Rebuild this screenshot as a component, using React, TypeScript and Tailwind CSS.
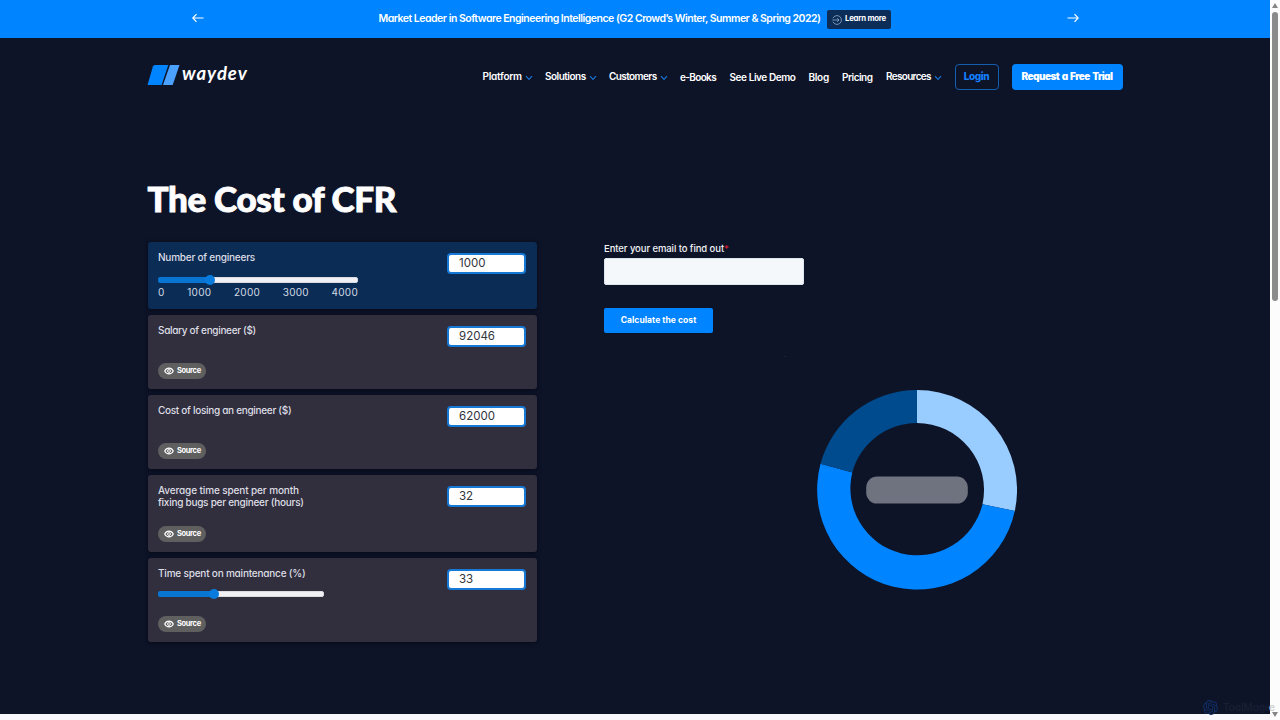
import React from "react";
import { SiOpenai } from "react-icons/si";

const sans = "font-['Inter','Open_Sans',sans-serif] [font-feature-settings:'cv11']";

function Chevron() {
  return (
    <svg viewBox="0 0 8 6" className="mt-[2px] h-[6px] w-2 shrink-0" fill="none" stroke="#1674d4" strokeWidth="1.2">
      <path d="M1 1.2 4 4.3 7 1.2" />
    </svg>
  );
}

function Arrow({ flip = false }: { flip?: boolean }) {
  return (
    <svg viewBox="0 0 12 10" className={flip ? "h-[10px] w-3 shrink-0 rotate-180" : "h-[10px] w-3 shrink-0"} fill="none" stroke="#fff" strokeWidth="1.2">
      <path d="M0.5 5H11M7.5 1.2 11.2 5 7.5 8.8" />
    </svg>
  );
}

type NavItem = { label: string; width: string; menu?: boolean };

const nav: NavItem[] = [
  { label: "Platform", width: "w-[62.5px] tracking-[-0.25px]", menu: true },
  { label: "Solutions", width: "w-[64px] tracking-[-0.5px]", menu: true },
  { label: "Customers", width: "w-[71px] tracking-[-0.58px]", menu: true },
  { label: "e-Books", width: "w-[49.5px] tracking-[-0.65px]" },
  { label: "See Live Demo", width: "w-[79px] tracking-[-0.42px]" },
  { label: "Blog", width: "w-[33.5px] tracking-[-0.3px]" },
  { label: "Pricing", width: "w-[44px] tracking-[-0.5px]" },
  { label: "Resources", width: "w-[68.5px] tracking-[-0.68px]", menu: true },
];

function Field({ value }: { value: string }) {
  return (
    <div className="mt-[11px] flex h-[21px] w-[79px] shrink-0 items-center rounded-[4px] border-2 border-[#1779d6] bg-white pl-[10px] text-[11.5px] text-[#30343b]">
      <span>{value}</span>
    </div>
  );
}

function Source() {
  return (
    <div className="flex h-4 w-12 items-center gap-[3px] rounded-full bg-[#5f5f60] pl-[6px] text-[7.5px] font-bold tracking-[-0.36px] text-white">
      <svg viewBox="0 0 10 8" className="h-2 w-[10px] shrink-0" fill="none" stroke="#fff">
        <path d="M0.7 4C2.6 0.2 7.4 0.2 9.3 4 7.4 7.8 2.6 7.8 0.7 4Z" strokeWidth="1.1" />
        <circle cx="5" cy="4" r="1.4" strokeWidth="1" />
      </svg>
      <span>Source</span>
    </div>
  );
}

function Slider({ className, fill }: { className: string; fill: string }) {
  return (
    <div className={`flex h-[10px] items-center ${className}`}>
      <div className={`h-[6px] rounded-l-[2px] bg-[#0975d2] ${fill}`} />
      <div className="z-10 -mx-[5px] size-[10px] shrink-0 rounded-full bg-[#087bdc]" />
      <div className="h-[6px] flex-1 rounded-r-[2px] border border-[#d9dbe0] bg-[#f1f0f4]" />
    </div>
  );
}

function Card({ className, value, children }: { className: string; value: string; children: React.ReactNode }) {
  return (
    <section className={`flex justify-between rounded-[3px] pr-[11px] pl-[10.5px] shadow-[0_1px_4px_#050a17] ${className}`}>
      <div className="flex flex-col">{children}</div>
      <Field value={value} />
    </section>
  );
}

const label = "mt-[9px] h-3 whitespace-nowrap text-[10px] font-medium leading-3 text-[#dedee5]";

export default function App() {
  return (
    <div className={`flex h-[720px] w-[1280px] overflow-hidden bg-[#0e1428] ${sans}`}>
      <div className="flex w-[1270px] shrink-0 flex-col">
        <div className="flex h-[38px] shrink-0 items-center bg-[#0084ff] pb-[2px] pl-[192px] text-white">
          <Arrow flip />
          <p className="mt-px ml-[174.5px] w-[448.5px] whitespace-nowrap text-[10.5px] font-semibold tracking-[-0.5px]">
            Market Leader in Software Engineering Intelligence (G2 Crowd’s Winter, Summer &amp; Spring 2022)
          </p>
          <button className="mt-[2px] flex h-[19px] w-[64px] shrink-0 items-center gap-[3px] rounded-[2px] bg-[#0c2d58] pl-[5px] text-[7.8px] font-bold tracking-[-0.25px] whitespace-nowrap">
            <svg viewBox="0 0 10 10" className="mt-px size-[10px] shrink-0" fill="none" stroke="#a9bdd6" strokeWidth=".7">
              <path d="M1 3.2A4.4 4.4 0 1 1 1 6.8M0.4 5H7M5.2 3.2 7 5 5.2 6.8" />
            </svg>
            Learn more
          </button>
          <div className="ml-[176px]">
            <Arrow />
          </div>
        </div>

        <header className="flex h-[77px] shrink-0 items-center pl-[147px] text-white">
          <svg viewBox="0 0 34 22" className="mb-[3px] h-[22px] w-[34px] shrink-0">
            <path d="M7.5 1H21.3L14.6 21H0.5L6 2.2Z" fill="#0084ff" />
            <path d="M23 1H32.5L25.7 21H16Z" fill="#4ba1ff" />
          </svg>
          <span className="mb-[5px] w-[301.5px] pl-px font-['Lato',sans-serif] text-[18.5px] font-bold tracking-[1px] italic">waydev</span>
          <nav className="flex text-[10px] font-semibold">
            {nav.map((n) => (
              <a key={n.label} className={`flex shrink-0 items-center gap-[3px] whitespace-nowrap ${n.width}`}>
                <span className={n.menu ? "" : "pt-px"}>{n.label}</span>
                {n.menu && <Chevron />}
              </a>
            ))}
          </nav>
          <button className="flex h-[26px] w-[44px] shrink-0 items-center justify-center rounded-[4px] border border-[#145eae] pb-px text-[10px] font-extrabold tracking-[-0.4px] text-[#147fff]">
            Login
          </button>
          <button className="ml-[13px] flex h-[26px] w-[111px] shrink-0 items-center justify-center rounded-[4px] bg-[#0084ff] pb-px text-[10px] font-black tracking-[-0.55px] [word-spacing:1px] whitespace-nowrap">
            Request a Free Trial
          </button>
        </header>

        <main className="flex h-[599px] shrink-0 pl-[147.5px]">
          <div className="w-[389.5px] shrink-0">
            <h1 className="mt-[63px] mb-[24px] h-10 font-['Lato',sans-serif] text-[35px] leading-10 font-black tracking-[-0.3px] whitespace-nowrap text-white [-webkit-text-stroke:0.9px_white]">
              The Cost of CFR
            </h1>
            <div className="flex flex-col gap-[6px]">
              <Card className="h-[67.4px] bg-[#0a2c55]" value="1000">
                <div className={`${label} tracking-[-0.22px]`}>Number of engineers</div>
                <Slider className="mt-[12px] w-[199.5px]" fill="w-[52px]" />
                <div className="flex h-[14px] w-[200px] items-center justify-between text-[10px] tracking-[0.25px] text-[#d5dae5]">
                  <span>0</span>
                  <span>1000</span>
                  <span>2000</span>
                  <span>3000</span>
                  <span>4000</span>
                </div>
              </Card>
              <Card className="h-[74px] bg-[#312f3e]" value="92046">
                <div className={`${label} tracking-[-0.32px]`}>Salary of engineer ($)</div>
                <div className="mt-[26.6px]"><Source /></div>
              </Card>
              <Card className="h-[74px] bg-[#312f3e]" value="62000">
                <div className={`${label} tracking-[-0.3px]`}>Cost of losing an engineer ($)</div>
                <div className="mt-[26.6px]"><Source /></div>
              </Card>
              <Card className="h-[77px] bg-[#312f3e]" value="32">
                <div className={`${label} mb-[12px]`}>
                  <span className="tracking-[-0.12px]">Average time spent per month</span>
                  <br />
                  <span className="tracking-[-0.26px]">fixing bugs per engineer (hours)</span>
                </div>
                <div className="mt-[17.6px]"><Source /></div>
              </Card>
              <Card className="h-[83.5px] bg-[#312f3e]" value="33">
                <div className={`${label} tracking-[-0.2px]`}>Time spent on maintenance (%)</div>
                <Slider className="mt-[9.6px] w-[166px]" fill="w-[56px]" />
                <div className="mt-[16.6px]"><Source /></div>
              </Card>
            </div>
          </div>

          <div className="ml-[67px] w-[420px] pt-[128px] [font-feature-settings:normal]">
            <label className="block h-[15px] text-[9.5px] leading-3 font-medium tracking-[-0.08px] whitespace-nowrap text-[#f0f2f5]">
              Enter your email to find out<span className="text-[#d41c2e]">*</span>
            </label>
            <div className="h-[27px] w-[200px] rounded-[2px] border border-[#dde5ed] bg-[#f5f8fa]" />
            <button className="mt-[23px] flex h-[25px] w-[109px] items-center justify-center rounded-[2px] bg-[#0084ff] text-[8.5px] font-bold tracking-[0.05px] whitespace-nowrap text-white">
              Calculate the cost
            </button>
            <div className="mt-[23px] ml-[181px] size-px bg-[#273047]" />
            <svg viewBox="-100 -100 200 200" className="mt-[33px] ml-[213.3px] size-[200px]">
              <path d="M0-100A100 100 0 0 1 97.8 21L65.5 14.2A67 67 0 0 0 0-67Z" fill="#99cdff" />
              <path d="M97.8 21A100 100 0 1 1-96.5-26.2L-64.7-17.6A67 67 0 1 0 65.5 14.2Z" fill="#0084ff" />
              <path d="M-96.5-26.2A100 100 0 0 1 0-100V-67A67 67 0 0 0-64.7-17.6Z" fill="#004b8d" />
              <rect x="-50.8" y="-13.4" width="101.6" height="27" rx="11" fill="#6f727f" />
            </svg>
          </div>
        </main>

        <div className="relative h-[6px] bg-[#f8f8fc]">
          <div className="absolute -top-[15px] left-[1203px] flex h-4 items-center gap-[5px] whitespace-nowrap text-[#171f34]">
            <SiOpenai className="size-[15px] text-[#102e68]" />
            <span className="text-[10px] font-semibold">ToolMage</span>
          </div>
        </div>
      </div>

      <div className="relative flex w-[10px] shrink-0 flex-col items-center bg-[#fcfcfc]">
        <svg viewBox="0 0 6 5" className="mt-[3px] h-[5px] w-[6px]"><path d="M3 0 6 5H0Z" fill="#858585" /></svg>
        <div className="mt-[4px] h-[289px] w-[6px] rounded-full bg-[#8b8b8b]" />
        <svg viewBox="0 0 6 5" className="mt-auto mb-[3px] h-[5px] w-[6px]"><path d="M3 5 6 0H0Z" fill="#858585" /></svg>
        <span className="absolute bottom-[7px] -left-px text-[10px] leading-3 font-semibold text-[#cfcfcf]">e</span>
      </div>
    </div>
  );
}
